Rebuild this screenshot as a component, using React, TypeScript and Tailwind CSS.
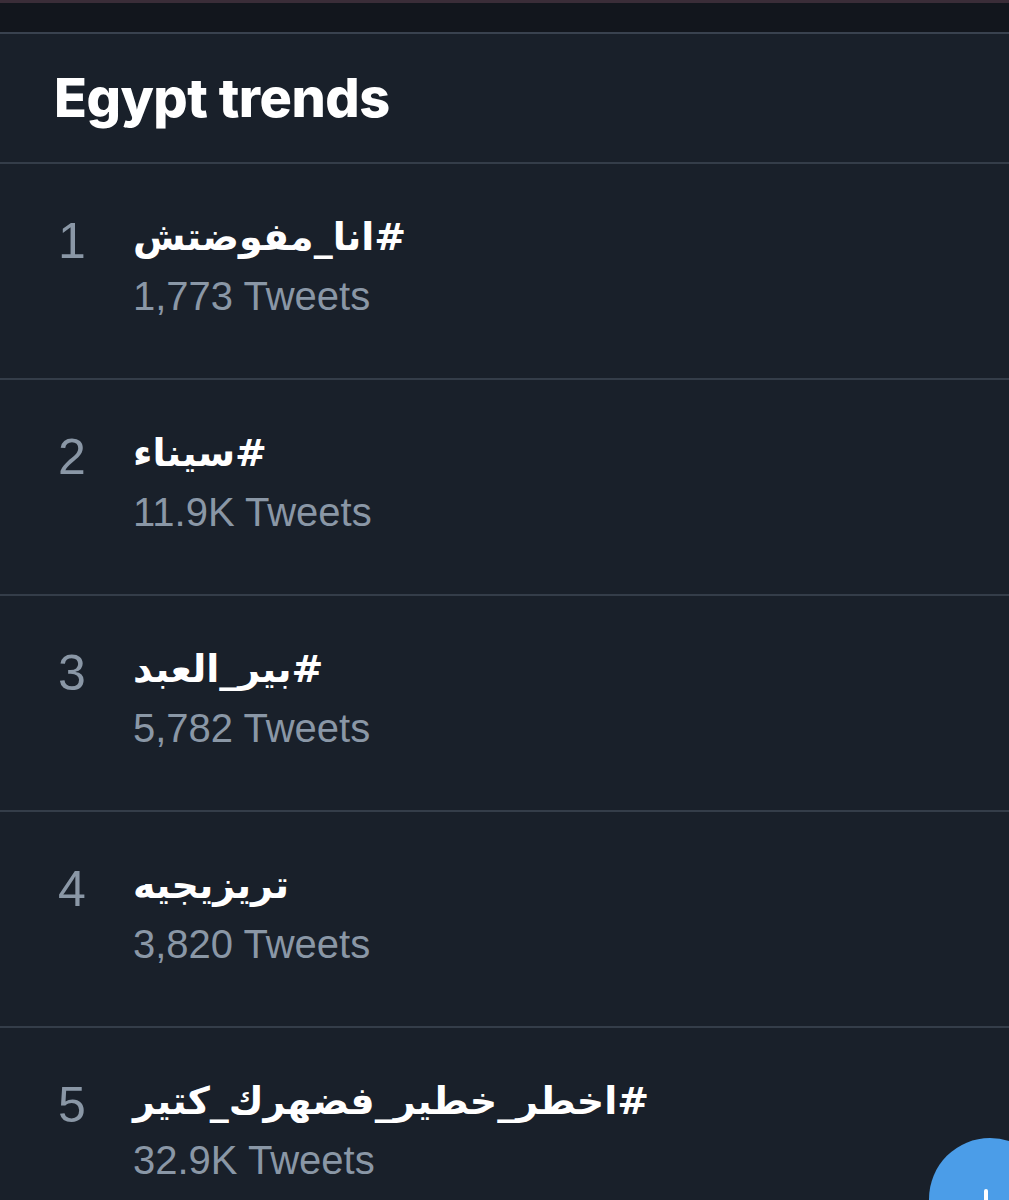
const trends = [
  { rank: 1, tag: '#انا_مفوضتش', count: '1,773 Tweets' },
  { rank: 2, tag: '#سيناء', count: '11.9K Tweets' },
  { rank: 3, tag: '#بير_العبد', count: '5,782 Tweets' },
  { rank: 4, tag: 'تريزيجيه', count: '3,820 Tweets' },
  { rank: 5, tag: '#اخطر_خطير_فضهرك_كتير', count: '32.9K Tweets' },
]

const latin = { fontFamily: '"Liberation Sans", Arial, sans-serif' }
const heading = { fontFamily: 'Inter, "Liberation Sans", sans-serif' }
const arabic = { fontFamily: '"DejaVu Sans", "Noto Sans", sans-serif' }

const TrendRow = ({ rank, tag, count }: { rank: number; tag: string; count: string }) => (
  <div className="flex border-b-2 border-[#343d49] pl-[58px] h-[216px]">
    <div className="w-[75px] shrink-0 pt-[49px] text-[50px] leading-[56px] text-[#8a97a6]" style={latin}>
      {rank}
    </div>
    <div className="flex flex-col pt-[45px]">
      <div dir="rtl" className="self-start text-[38px] leading-[56px] font-bold text-white" style={arabic}>
        {tag}
      </div>
      <div className="mt-[6px] text-[40px] leading-[50px] text-[#8a97a6]" style={latin}>
        {count}
      </div>
    </div>
  </div>
)

export default function App() {
  return (
    <div className="relative h-[1200px] w-full overflow-hidden bg-[#19202a]">
      <div className="h-[34px] border-t-[3px] border-[#3a2d38] border-b-2 border-b-[#39424f] bg-[#12161d]" />
      <div className="flex h-[130px] items-center border-b-2 border-[#343d49] pl-[54px]">
        <h2 className="text-[54px] leading-none font-extrabold tracking-[-0.5px] text-white" style={heading}>
          Egypt trends
        </h2>
      </div>
      {trends.map((t) => (
        <TrendRow key={t.rank} {...t} />
      ))}
      <div className="absolute left-[929px] top-[1138px] h-[122px] w-[122px] rounded-full bg-[#4b9de8]">
        <div className="absolute left-[55px] top-[51px] h-[26px] w-[4px] rounded-full bg-white" />
      </div>
    </div>
  )
}
